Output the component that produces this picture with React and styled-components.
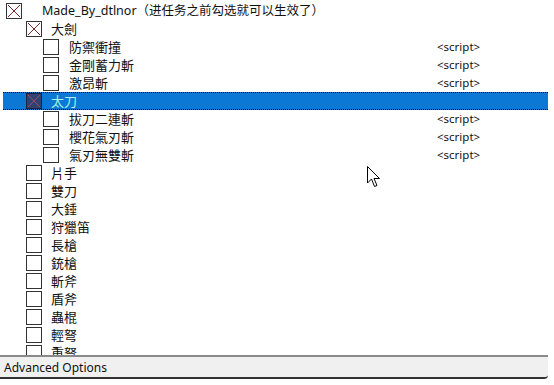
import React from 'react'
import styled, { createGlobalStyle } from 'styled-components'

const GlobalStyle = createGlobalStyle`
  html, body {
    margin: 0;
    padding: 0;
    background: #fff;
  }
  body {
    font-family: "Segoe UI", "Noto Sans", "Noto Sans CJK TC", sans-serif;
    color: #000;
  }
`

const rows = [
  { level: 0, label: 'Made_By_dtlnor（进任务之前勾选就可以生效了）', checked: true },
  { level: 1, label: '大劍', checked: true },
  { level: 2, label: '防禦衝撞', script: true },
  { level: 2, label: '金剛蓄力斬', script: true },
  { level: 2, label: '激昂斬', script: true },
  { level: 1, label: '太刀', checked: true, selected: true },
  { level: 2, label: '拔刀二連斬', script: true },
  { level: 2, label: '櫻花氣刃斬', script: true },
  { level: 2, label: '氣刃無雙斬', script: true },
  { level: 1, label: '片手' },
  { level: 1, label: '雙刀' },
  { level: 1, label: '大錘' },
  { level: 1, label: '狩獵笛' },
  { level: 1, label: '長槍' },
  { level: 1, label: '銃槍' },
  { level: 1, label: '斬斧' },
  { level: 1, label: '盾斧' },
  { level: 1, label: '蟲棍' },
  { level: 1, label: '輕弩' },
  { level: 1, label: '重弩' },
]

// box left edge per level (relative to row start at x=3)
const indent = [3, 23, 40]
// gap between box right edge and text per level
const textGap = [20, 9, 10]

export default function App() {
  return (
    <Root>
      <GlobalStyle />
      <Tree>
        {rows.map((r, i) => (
          <Row key={i} $selected={r.selected}>
            <Box style={{ marginLeft: indent[r.level] }} $selected={r.selected}>
              {r.checked && (
                <svg width="16" height="16" viewBox="0 0 16 16">
                  <line x1="2" y1="2" x2="14" y2="14" stroke={r.selected ? '#9a4a62' : '#7a2a2a'} strokeWidth="1" />
                  <line x1="14" y1="2" x2="2" y2="14" stroke={r.selected ? '#9a4a62' : '#7a2a2a'} strokeWidth="1" />
                </svg>
              )}
            </Box>
            <Label style={{ marginLeft: textGap[r.level] }} $level={r.level} $selected={r.selected}>
              {r.label}
            </Label>
            {r.script && <Script>&lt;script&gt;</Script>}
          </Row>
        ))}
        <Cursor>
          <svg width="14" height="22" viewBox="0 0 14 22">
            <path d="M0.5 0.5 L0.5 17 L4.5 13 L7.5 20.5 L10 19.5 L7 12.5 L12.5 12.5 Z" fill="#fff" stroke="#000" strokeWidth="1" />
          </svg>
        </Cursor>
      </Tree>
      <Footer>
        <FooterText>Advanced Options</FooterText>
      </Footer>
    </Root>
  )
}

const Root = styled.div`
  width: 554px;
  height: 385px;
  background: #fff;
  display: flex;
  flex-direction: column;
  overflow: hidden;
`

const Tree = styled.div`
  position: relative;
  height: 353px;
  padding-top: 2px;
  overflow: hidden;
  display: flex;
  flex-direction: column;
`

const Row = styled.div`
  height: 18px;
  flex: 0 0 18px;
  box-sizing: border-box;
  display: flex;
  align-items: center;
  margin: 0 6px 0 3px;
  background: ${p => (p.$selected ? '#0a78d4' : 'transparent')};
  border-top: 1px dotted ${p => (p.$selected ? '#000' : 'transparent')};
  border-bottom: 1px dotted ${p => (p.$selected ? '#000' : 'transparent')};
  position: relative;
`

const Box = styled.div`
  width: 16px;
  height: 16px;
  box-sizing: border-box;
  border: 1px solid ${p => (p.$selected ? '#1a2540' : '#333')};
  background: ${p => (p.$selected ? '#2f4272' : '#fff')};
  flex: 0 0 16px;
  position: relative;

  svg {
    position: absolute;
    left: -1px;
    top: -1px;
  }
`

const Label = styled.span`
  font-family: ${p => (p.$level === 0 ? '"Segoe UI", "Noto Sans", "Noto Sans CJK SC"' : '"Noto Sans CJK TC"')}, sans-serif;
  font-size: ${p => (p.$level === 0 ? '12.5px' : '13px')};
  line-height: 18px;
  color: ${p => (p.$selected ? '#a8f5e4' : '#111')};
  white-space: nowrap;
`

const Script = styled.span`
  position: absolute;
  left: 434px;
  font-family: "Segoe UI", "Noto Sans", sans-serif;
  font-size: 11.5px;
  line-height: 18px;
  color: #111;
`

const Cursor = styled.div`
  position: absolute;
  left: 367px;
  top: 166px;
  width: 14px;
  height: 22px;
`

const Footer = styled.div`
  height: 20px;
  margin-right: 6px;
  border-top: 2px solid #8a8a8a;
  border-bottom: 2px solid #333;
  background: #f0f0f0;
  border-bottom-right-radius: 4px;
  display: flex;
  align-items: center;
  padding-left: 4px;
`

const FooterText = styled.span`
  font-family: "Segoe UI", "Noto Sans", sans-serif;
  font-size: 12px;
  color: #111;
`
